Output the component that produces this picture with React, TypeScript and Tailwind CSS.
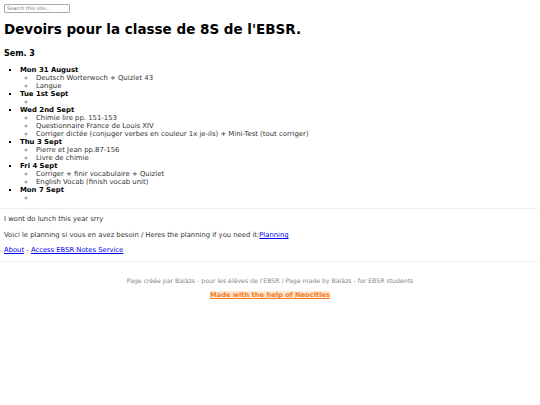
export default function App() {
  const days: { d: string; items: string[] }[] = [
    { d: "Mon 31 August", items: ["Deutsch Worterwoch + Quizlet 43", "Langue"] },
    { d: "Tue 1st Sept", items: [""] },
    {
      d: "Wed 2nd Sept",
      items: [
        "Chimie lire pp. 151-153",
        "Questionnaire France de Louis XIV",
        "Corriger dictée (conjuger verbes en couleur 1x je-ils) + Mini-Test (tout corriger)",
      ],
    },
    { d: "Thu 3 Sept", items: ["Pierre et Jean pp.87-156", "Livre de chimie"] },
    { d: "Fri 4 Sept", items: ["Corriger + finir vocabulaire + Quizlet", "English Vocab (finish vocab unit)"] },
    { d: "Mon 7 Sept", items: [""] },
  ];
  return (
    <div className="w-[540px] h-[405px] bg-white text-black overflow-hidden px-[4px] pt-[4px]" style={{ fontFamily: '"DejaVu Sans", Verdana, sans-serif' }}>
      <div className="w-[66px] h-[9px] border border-[#aaa] rounded-[1px] text-[5px] leading-[7px] text-[#777] px-[2px]">Search this site...</div>
      <h1 className="mt-[8px] text-[13.5px] font-bold leading-[16px]">Devoirs pour la classe de 8S de l'EBSR.</h1>
      <h3 className="mt-[12px] text-[8px] font-bold leading-[10px]">Sem. 3</h3>
      <ul className="mt-[7px] pl-[16px] text-[6.9px] leading-[8px] list-[square]">
        {days.map((day) => (
          <li key={day.d}>
            <b className="font-bold">{day.d}</b>
            <ul className="pl-[16px] text-[#333] list-[circle] marker:text-[#888]">
              {day.items.map((it, i) => (
                <li key={i} className="h-[8px]">
                  {it}
                </li>
              ))}
            </ul>
          </li>
        ))}
      </ul>
      <div className="mt-[6px] ml-[-4px] w-[537px] border-t border-[#eee]" />
      <p className="mt-[6px] text-[6.8px] leading-[8px] text-[#333]">I wont do lunch this year srry</p>
      <p className="mt-[8px] text-[6.8px] leading-[8px] text-[#333]">
        Voici le planning si vous en avez besoin / Heres the planning if you need it:
        <a className="text-[#00e] underline">Planning</a>
      </p>
      <p className="mt-[7px] text-[6.8px] leading-[8px] text-[#333]">
        <a className="text-[#00e] underline">About</a> - <a className="text-[#00e] underline">Access EBSR Notes Service</a>
      </p>
      <div className="mt-[7px] ml-[-4px] w-[537px] border-t border-[#eee]" />
      <p className="mt-[15px] text-center text-[6.2px] leading-[8px] text-[#888]">
        Page créée par Balázs - pour les élèves de l'EBSR / Page made by Balázs - for EBSR students
      </p>
      <p className="mt-[6px] text-center text-[6.7px] leading-[9px]">
        <a className="text-[#f57c23] font-bold underline bg-[#fde6d2]">Made with the help of Neocities</a>
      </p>
    </div>
  );
}
